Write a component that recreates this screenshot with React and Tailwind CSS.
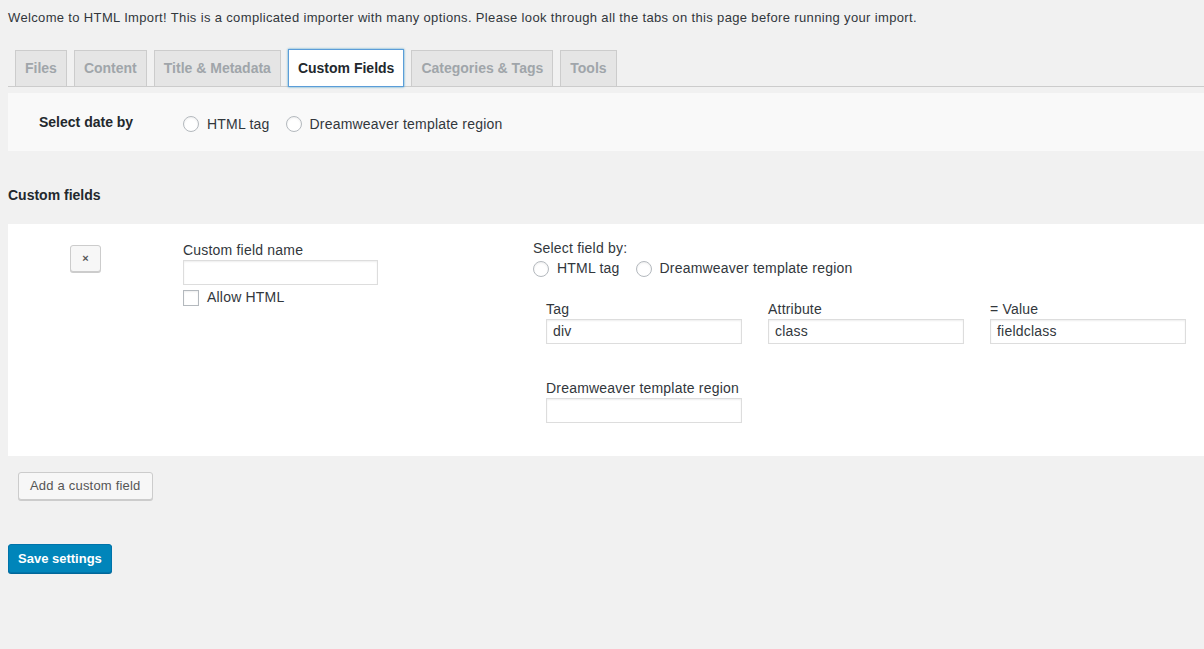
import React from 'react';

const tabs = ['Files', 'Content', 'Title & Metadata', 'Custom Fields', 'Categories & Tags', 'Tools'];

const Radio = ({ label }) => (
    <label className="flex items-center">
        <span className="h-4 w-4 rounded-full border border-[#b4b9be] bg-white shadow-[inset_0_1px_2px_rgba(0,0,0,0.07)]" />
        <span className="ml-2">{label}</span>
    </label>
);

const Field = ({ label, value, className = '' }) => (
    <div className={`flex flex-col ${className}`}>
        <div className="h-[20px] leading-[20px]">{label}</div>
        <div className="flex h-[25px] w-[196px] items-center border border-[#ddd] bg-white px-[6px] shadow-[inset_0_1px_2px_rgba(0,0,0,0.07)]">
            {value}
        </div>
    </div>
);

const App = () => {
    return (
        <div className="min-h-[649px] bg-[#f1f1f1] pt-[8px] text-[13px] tracking-[0.2px] text-[#32373c]" style={{ fontFamily: '"Liberation Sans", Arial, sans-serif' }}>
            <p className="ml-[8px] h-[20px] leading-[20px] tracking-[0.35px]">
                Welcome to HTML Import! This is a complicated importer with many options. Please look through all the tabs on this page before running your import.
            </p>

            <div className="ml-[8px] mt-[21px] flex items-end gap-[7px] border-b border-[#ccc] pl-[7px] tracking-normal">
                {tabs.map((tab) => (
                    tab === 'Custom Fields' ? (
                        <div key={tab} className="-mb-px flex h-[38px] items-center border border-[#5b9dd9] bg-white px-[9px] text-[14px] font-semibold text-[#23282d] shadow-[0_0_2px_rgba(30,140,190,0.8)]">
                            {tab}
                        </div>
                    ) : (
                        <div key={tab} className="flex h-[36px] items-center border border-b-0 border-[#ccc] bg-[#e5e5e5] px-[9px] text-[14px] font-semibold text-[#a0a5aa]">
                            {tab}
                        </div>
                    )
                ))}
            </div>

            <div className="ml-[8px] mt-[6px] flex h-[58px] items-center bg-[#f9f9f9]">
                <div className="w-[175px] pl-[31px] text-[14px] font-semibold tracking-normal text-[#23282d]">Select date by</div>
                <div className="mt-[4px] flex items-center gap-[16px] text-[14px]">
                    <Radio label="HTML tag" />
                    <Radio label="Dreamweaver template region" />
                </div>
            </div>

            <h2 className="ml-[8px] mt-[34px] text-[14px] font-semibold tracking-normal text-[#23282d]">Custom fields</h2>

            <div className="ml-[8px] mt-[18px] flex h-[232px] bg-white pt-[21px] text-[14px]">
                <div className="w-[175px] pl-[62px]">
                    <div className="flex h-[27px] w-[31px] items-center justify-center rounded-[3px] border border-[#ccc] bg-[#f7f7f7] text-[11px] font-bold text-[#555] shadow-[0_1px_0_#ccc]">
                        ×
                    </div>
                </div>
                <div className="w-[350px] -mt-[5px]">
                    <div className="h-[20px] leading-[20px]">Custom field name</div>
                    <div className="h-[25px] w-[195px] border border-[#ddd] bg-white shadow-[inset_0_1px_2px_rgba(0,0,0,0.07)]" />
                    <label className="mt-[2px] flex items-center">
                        <span className="h-4 w-4 border border-[#b4b9be] bg-white shadow-[inset_0_1px_2px_rgba(0,0,0,0.07)]" />
                        <span className="ml-2">Allow HTML</span>
                    </label>
                </div>
                <div className="-mt-[7px]">
                    <div className="h-[20px] leading-[20px]">Select field by:</div>
                    <div className="flex items-center gap-[16px]">
                        <Radio label="HTML tag" />
                        <Radio label="Dreamweaver template region" />
                    </div>
                    <div className="ml-[13px] mt-[20px] flex gap-[26px]">
                        <Field label="Tag" value="div" />
                        <Field label="Attribute" value="class" />
                        <Field label="= Value" value="fieldclass" />
                    </div>
                    <Field className="ml-[13px] mt-[34px]" label="Dreamweaver template region" value="" />
                </div>
            </div>

            <button className="ml-[18px] mt-[16px] h-[28px] rounded-[3px] border border-[#ccc] bg-[#f7f7f7] px-[11px] text-[13px] text-[#555] shadow-[0_1px_0_#ccc]">
                Add a custom field
            </button>

            <div>
                <button className="ml-[8px] mt-[44px] h-[29px] rounded-[3px] border border-[#0073aa] bg-[#0085ba] px-[9px] text-[13px] font-semibold tracking-normal text-white shadow-[0_1px_0_#006799]">
                    Save settings
                </button>
            </div>
        </div>
    );
};

export default App;
